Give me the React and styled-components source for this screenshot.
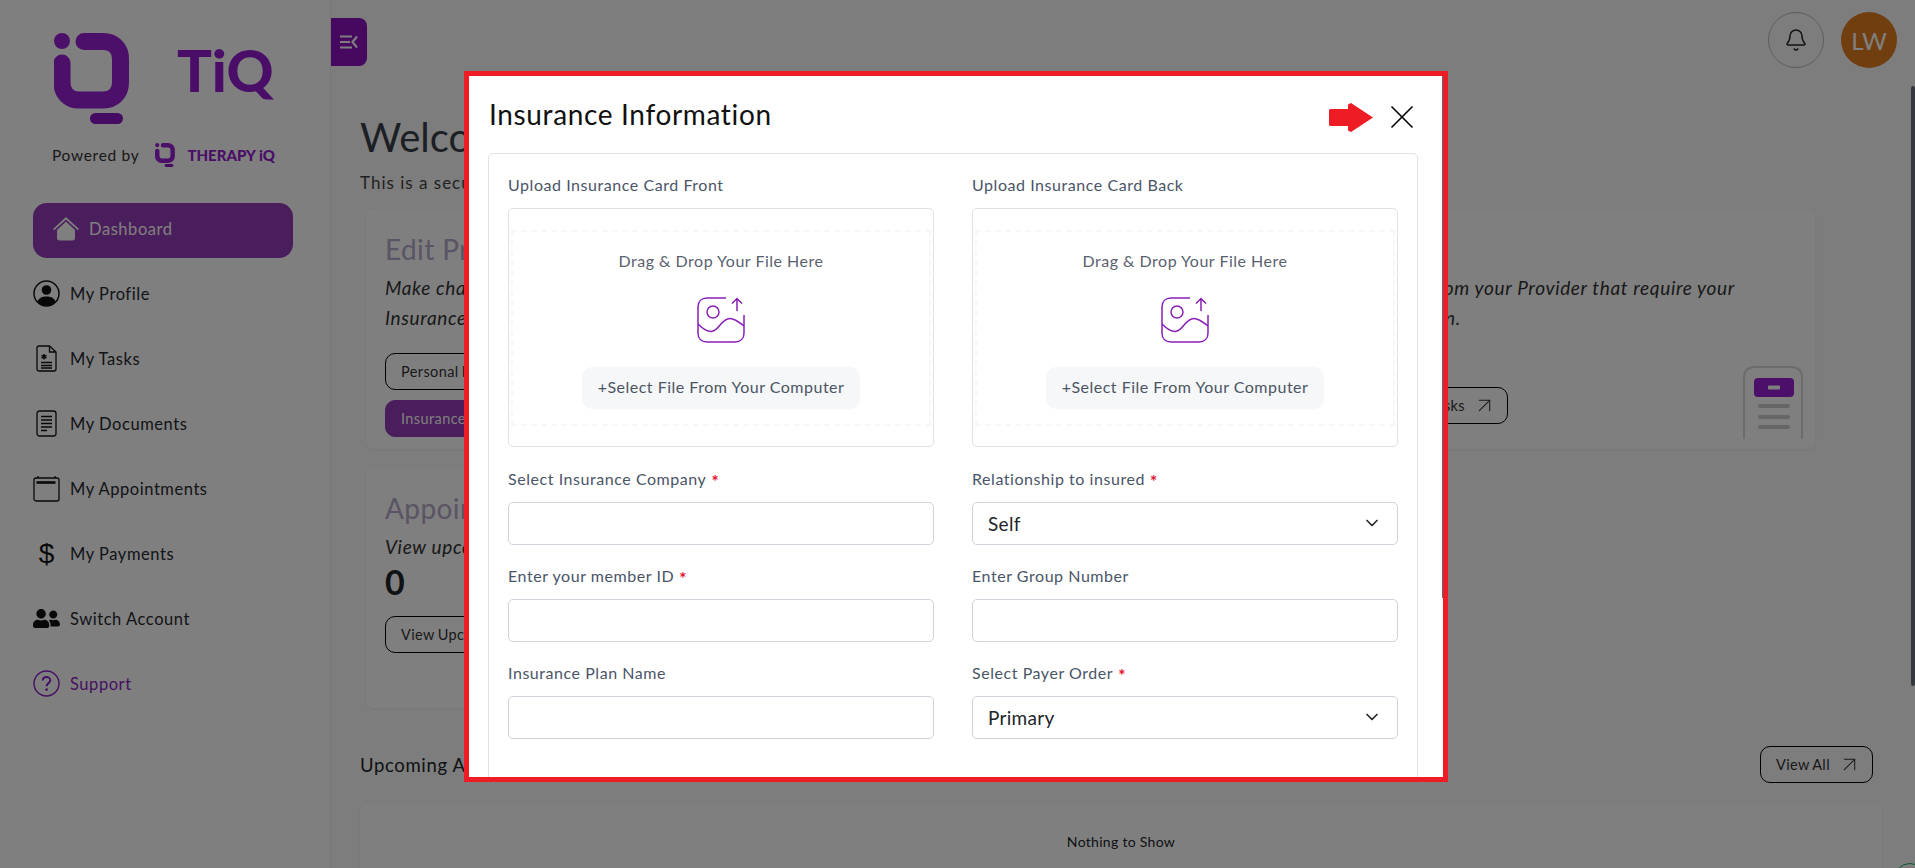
import React from 'react';
import styled, { createGlobalStyle } from 'styled-components';
import { Bell, ChevronDown, ArrowUpRight } from 'lucide-react';
import { FaUserFriends } from 'react-icons/fa';

const GlobalStyle = createGlobalStyle`
    * { box-sizing: border-box; }
    html, body { margin: 0; height: 100%; overflow: hidden; }
    body { font-family: "Lato", "Noto Sans", sans-serif; color: #212529; background: #fff; }
`;

const Page = styled.div`
    display: flex;
    height: 868px;
    overflow: hidden;
    position: relative;
`;

const Sidebar = styled.aside`
    width: 331px;
    flex-shrink: 0;
    padding: 33px 0 0 33px;
    background: #fff;
    border-right: 1px solid #f0f0f0;
`;

const LogoRow = styled.div`
    display: flex;
    align-items: center;
    height: 91px;
    padding-left: 21px;
`;

const BrandName = styled.div`
    margin: -18px 0 0 48px;
    font-size: 58px;
    line-height: 1;
    font-weight: 900;
    color: #941ad0;
`;

const PoweredRow = styled.div`
    display: flex;
    align-items: center;
    gap: 16px;
    height: 24px;
    margin-top: 19px;
    padding-left: 19px;
    font-size: 15.5px;
    letter-spacing: 0.7px;
    color: #333;
`;

const PoweredBrand = styled.span`
    margin-left: -4px;
    font-size: 15px;
    font-weight: 900;
    letter-spacing: 0;
    color: #941ad0;
`;

const NavList = styled.nav`
    margin-top: 36px;
`;

const NavActive = styled.div`
    display: flex;
    align-items: center;
    gap: 10px;
    width: 260px;
    height: 55px;
    margin-bottom: 3px;
    padding: 0 0 3px 20px;
    border-radius: 14px;
    background: #943ab8;
    color: #fff;
    font-size: 16.5px;
    letter-spacing: 0.55px;
`;

const NavItem = styled.div`
    display: flex;
    align-items: center;
    gap: 10px;
    height: 65px;
    font-size: 16.5px;
    letter-spacing: 0.55px;
    color: ${(p) => (p.$accent ? '#8c1fc4' : '#262a30')};
`;

const NavIcon = styled.span`
    display: flex;
    align-items: center;
    justify-content: center;
    width: 27px;
    height: 27px;
`;

const DollarGlyph = styled.span`
    font-family: "Liberation Sans", sans-serif;
    font-size: 28px;
    line-height: 1;
    letter-spacing: 0;
    color: #111;
`;

const Main = styled.main`
    flex: 1;
    min-width: 0;
    background: #fbfbfb;
`;

const Topbar = styled.header`
    display: flex;
    justify-content: space-between;
    align-items: flex-start;
    height: 80px;
    padding: 12px 18px 0 0;
`;

const ToggleButton = styled.button`
    display: flex;
    align-items: center;
    justify-content: center;
    width: 36px;
    height: 48px;
    margin-top: 6px;
    padding: 0;
    border: none;
    border-radius: 0 8px 8px 0;
    background: #8c12be;
`;

const TopActions = styled.div`
    display: flex;
    gap: 17px;
`;

const BellButton = styled.div`
    display: flex;
    align-items: center;
    justify-content: center;
    width: 56px;
    height: 56px;
    border: 1px solid #bbb;
    border-radius: 50%;
    color: #212529;
`;

const Avatar = styled.div`
    display: flex;
    align-items: center;
    justify-content: center;
    width: 56px;
    height: 56px;
    border-radius: 50%;
    background: #e27c20;
    color: #fff;
    font-size: 24px;
`;

const Content = styled.div`
    padding: 33px 33px 0 29px;
`;

const Heading = styled.h1`
    margin: 0;
    font-size: 40px;
    line-height: 48px;
    font-weight: 400;
    color: #383e48;
`;

const SubText = styled.p`
    margin: 10px 0 0;
    font-size: 17px;
    line-height: 24px;
    letter-spacing: 1px;
    color: #444;
`;

const CardGrid = styled.div`
    display: grid;
    grid-template-columns: repeat(3, 1fr);
    gap: 19px 16px;
    margin: 14px 67px 0 6px;
`;

const Card = styled.section`
    position: relative;
    height: 240px;
    padding: 20px 19px;
    border-radius: 8px;
    background: #fff;
    box-shadow: 0 1px 4px rgba(0, 0, 0, 0.06);
    overflow: hidden;
`;

const CardTitle = styled.h2`
    margin: 0;
    font-size: 28px;
    line-height: 40px;
    font-weight: 400;
    letter-spacing: 0.4px;
    color: #b4a8c8;
`;

const CardText = styled.p`
    margin: 4px 0 0;
    font-size: 19px;
    line-height: 30px;
    font-style: italic;
    letter-spacing: 0.65px;
    color: #333;
    max-width: 400px;
`;

const CardCount = styled.div`
    font-size: 34px;
    line-height: 40px;
    font-weight: 700;
`;

const OutlineButton = styled.button`
    display: flex;
    align-items: center;
    justify-content: space-between;
    gap: 7px;
    height: 37px;
    padding: 0 10px 0 15px;
    border: 1px solid ${(p) => (p.$filled ? '#943ab8' : '#000')};
    border-radius: 10px;
    background: ${(p) => (p.$filled ? '#943ab8' : 'transparent')};
    color: ${(p) => (p.$filled ? '#fff' : '#333')};
    font-family: inherit;
    font-size: 14.5px;
    letter-spacing: 0.4px;
    word-spacing: -1px;
`;

const ButtonStack = styled.div`
    display: flex;
    flex-direction: column;
    align-items: flex-start;
    gap: 10px;
    margin-top: ${(p) => p.$top}px;
`;

const DocArt = styled.svg`
    position: absolute;
    right: 12px;
    bottom: 10px;
`;

const SectionHead = styled.div`
    display: flex;
    justify-content: space-between;
    align-items: center;
    margin: 38px 9px 0 0;
    font-size: 18.5px;
    letter-spacing: 0.65px;
`;

const EmptyTable = styled.div`
    height: 200px;
    margin-top: 21px;
    padding-top: 28px;
    border-radius: 8px;
    background: #fff;
    font-size: 14px;
    line-height: 20px;
    letter-spacing: 0.3px;
    text-align: center;
    box-shadow: 0 1px 4px rgba(0, 0, 0, 0.06);
`;

const ChatRing = styled.div`
    position: absolute;
    right: -11px;
    bottom: -27px;
    width: 32px;
    height: 32px;
    border: 1px solid #12b45c;
    border-radius: 50%;
`;

const PageThumb = styled.div`
    position: absolute;
    top: 86px;
    right: 0;
    z-index: 2;
    width: 4px;
    height: 600px;
    border-radius: 2px;
    background: #33383e;
`;

const Backdrop = styled.div`
    position: fixed;
    inset: 0;
    padding: 71px 0 0 464px;
    background: rgba(0, 0, 0, 0.5);
`;

const Modal = styled.div`
    position: relative;
    width: 984px;
    height: 711px;
    border: 5px solid #ee1c25;
    background: #fff;
    overflow: hidden;
`;

const ModalThumb = styled.div`
    position: absolute;
    top: 0;
    right: 0;
    width: 1px;
    height: 522px;
    background: #5a6b7d;
`;

const ModalHead = styled.div`
    display: flex;
    align-items: center;
    justify-content: space-between;
    height: 77px;
    padding: 5px 29px 0 20px;
`;

const ModalTitle = styled.h3`
    margin: 0 0 6px;
    font-size: 28px;
    line-height: 40px;
    font-weight: 400;
    color: #111;
    letter-spacing: 0.65px;
`;

const CloseGroup = styled.div`
    display: flex;
    align-items: center;
    gap: 17px;
`;

const ModalBody = styled.div`
    margin: 0 25px 0 19px;
    padding: 19px 18px 100px 19px;
    border: 1px solid #dee2e6;
    border-radius: 5px;
`;

const FormGrid = styled.div`
    display: grid;
    grid-template-columns: 426px 426px;
    gap: 19px 38px;
`;

const Label = styled.div`
    height: 24px;
    margin-bottom: 11px;
    font-size: 16px;
    line-height: 24px;
    color: #4a5568;
    letter-spacing: 0.55px;
`;

const Required = styled.span`
    margin-left: 5px;
    color: #e3122d;
    font-size: 17px;
    font-weight: 700;
    vertical-align: -3px;
`;

const UploadBox = styled.div`
    height: 239px;
    margin-bottom: 1px;
    padding: 21px 2px 0;
    border: 1px solid #dee2e6;
    border-radius: 5px;
`;

const DropZone = styled.div`
    display: flex;
    flex-direction: column;
    align-items: center;
    height: 196px;
    padding-top: 17px;
    border: 2px dashed #f6f7f9;
    font-size: 16px;
    line-height: 24px;
    letter-spacing: 0.5px;
    color: #5a6270;
`;

const UploadIcon = styled.svg`
    margin: 24px 0 24px;
`;

const SelectFile = styled.div`
    display: flex;
    align-items: center;
    justify-content: center;
    width: 278px;
    height: 42px;
    padding-bottom: 3px;
    border-radius: 10px;
    background: #f6f7f9;
    color: #4b5563;
`;

const Field = styled.div`
    display: flex;
    align-items: center;
    justify-content: space-between;
    height: 43px;
    padding: 0 15px 1px;
    border: 1px solid #ced4da;
    border-radius: 5px;
    background: #fff;
    font-size: 19px;
    letter-spacing: 0.3px;
    color: #212529;
`;

function LogoMark({ width, height }) {
    return (
        <svg width={width} height={height} viewBox="54 33 75 91" fill="none">
            <circle cx="62" cy="41" r="8" fill="#981ed4" />
            <path d="M84 41.500H103C113.500 41.500 120.500 48.500 120.500 59V82.500C120.500 93 113.500 100 103 100H79C69 100 62 93 62 82.500V63" stroke="#981ed4" strokeWidth="17" strokeLinecap="round" />
            <rect x="90" y="113" width="33" height="11" rx="5.500" fill="#8a14c4" />
        </svg>
    );
}

function ToggleIcon() {
    return (
        <svg width="18" height="14" viewBox="0 0 18 14" fill="none" stroke="#fff" strokeWidth="2.200">
            <path d="M0 1.500H12M0 7H10M0 12.500H12" />
            <path d="M17 1.500L12.500 7L17 12.500" />
        </svg>
    );
}

function HomeIcon() {
    return (
        <svg width="26" height="24" viewBox="0 0 26 24" fill="#fff">
            <path d="M13 0L26 12L24.800 13.300L13 2.500L1.200 13.300L0 12Z" />
            <path d="M4 13L13 4.500L22 13V21C22 22.700 21 23.500 19.500 23.500H6.500C5 23.500 4 22.700 4 21Z" />
        </svg>
    );
}

function ProfileIcon() {
    return (
        <svg width="27" height="27" viewBox="0 0 27 27">
            <circle cx="13.500" cy="13.500" r="12.500" fill="none" stroke="#111" strokeWidth="1.500" />
            <circle cx="13.500" cy="10" r="4.800" fill="#111" />
            <path d="M4.500 21.500C6 17.500 9.500 16.500 13.500 16.500S21 17.500 22.500 21.500C20 24.500 17 25.800 13.500 25.800S7 24.500 4.500 21.500Z" fill="#111" />
        </svg>
    );
}

function TaskIcon() {
    return (
        <svg width="21" height="27" viewBox="0 0 21 27" fill="none" stroke="#111" strokeWidth="1.300">
            <path d="M3 1H13.500L20 7V24C20 25.300 19.200 26 18 26H3C1.800 26 1 25.300 1 24V3C1 1.800 1.800 1 3 1Z" />
            <path d="M13.500 1V7H20" />
            <path d="M5 17.500H16M5 20.500H16M5 23H16" />
            <path d="M8 9V14.500M5.500 10.300L10.500 13.200M10.500 10.300L5.500 13.200" strokeWidth="1.500" />
        </svg>
    );
}

function DocumentIcon() {
    return (
        <svg width="21" height="27" viewBox="0 0 21 27" fill="none" stroke="#111" strokeWidth="1.300">
            <rect x="1" y="1" width="19" height="25" rx="2.500" />
            <path d="M5 6.500H16M5 10H16M5 13.500H16M5 17H16M5 20.500H11" />
        </svg>
    );
}

function CalendarIcon() {
    return (
        <svg width="27" height="27" viewBox="0 0 27 27" fill="none" stroke="#111" strokeWidth="1.300">
            <rect x="1" y="3" width="25" height="23" rx="2" />
            <path d="M5 1V3M22 1V3" />
            <path d="M3.500 7.500H22.500" strokeWidth="2.600" />
        </svg>
    );
}

function SupportIcon() {
    return (
        <svg width="27" height="27" viewBox="0 0 27 27" fill="none" stroke="#8c1fc4" strokeWidth="1.400">
            <circle cx="13.500" cy="13.500" r="12.500" />
            <path d="M9.800 10.500C9.800 8.300 11.500 7 13.500 7S17.300 8.300 17.300 10.300C17.300 13 13.600 13.300 13.600 16.200" strokeWidth="2" />
            <circle cx="13.600" cy="19.600" r="1.300" fill="#8c1fc4" stroke="none" />
        </svg>
    );
}

function CloseIcon() {
    return (
        <svg width="24" height="24" viewBox="0 0 24 24" fill="none" stroke="#000" strokeWidth="1.600">
            <path d="M1.500 1.500L22.500 22.500M22.500 1.500L1.500 22.500" />
        </svg>
    );
}

function RedArrow() {
    return (
        <svg width="44" height="29" viewBox="0 0 44 29" fill="#ee1c25">
            <path d="M1 6H19V1.500L22 0L44 14.500L22 29L19 27.500V23H1L0 22V7Z" />
        </svg>
    );
}

function ImageUpload() {
    return (
        <UploadIcon width="48" height="46" viewBox="0 0 48 46" fill="none" stroke="#8a1fb8" strokeWidth="1.500">
            <path d="M29 1H10C4.500 1 1 4.500 1 10V36C1 41.500 4.500 45 10 45H38C43.500 45 47 41.500 47 36V18" />
            <circle cx="16" cy="15" r="6" />
            <path d="M1 27C5 31 9 34.500 14 34.500C22 34.500 24 21.500 33 21.500C38 21.500 43 26 47 29" />
            <path d="M40 14V2M35 6.500L40 1.500L45 6.500" />
        </UploadIcon>
    );
}

function OpenArrow() {
    return <ArrowUpRight size={25} strokeWidth={1} />;
}

function UploadField({ title }) {
    return (
        <div>
            <Label>{title}</Label>
            <UploadBox>
                <DropZone>
                    Drag &amp; Drop Your File Here
                    <ImageUpload />
                    <SelectFile>+Select File From Your Computer</SelectFile>
                </DropZone>
            </UploadBox>
        </div>
    );
}

function FormField({ title, required, value }) {
    return (
        <div>
            <Label>
                {title}
                {required && <Required>*</Required>}
            </Label>
            <Field>
                {value}
                {value && <ChevronDown size={20} color="#212529" />}
            </Field>
        </div>
    );
}

const navItems = [
    { label: 'My Profile', icon: <ProfileIcon /> },
    { label: 'My Tasks', icon: <TaskIcon /> },
    { label: 'My Documents', icon: <DocumentIcon /> },
    { label: 'My Appointments', icon: <CalendarIcon /> },
    { label: 'My Payments', icon: <DollarGlyph>$</DollarGlyph> },
    { label: 'Switch Account', icon: <FaUserFriends size={27} color="#111" /> },
    { label: 'Support', icon: <SupportIcon />, accent: true },
];

export default function App() {
    return (
        <Page>
            <GlobalStyle />
            <Sidebar>
                <LogoRow>
                    <LogoMark width={75} height={91} />
                    <BrandName>TiQ</BrandName>
                </LogoRow>
                <PoweredRow>
                    Powered by
                    <LogoMark width={20} height={24} />
                    <PoweredBrand>THERAPY iQ</PoweredBrand>
                </PoweredRow>
                <NavList>
                    <NavActive>
                        <HomeIcon />
                        Dashboard
                    </NavActive>
                    {navItems.map((item) => (
                        <NavItem key={item.label} $accent={item.accent}>
                            <NavIcon>{item.icon}</NavIcon>
                            {item.label}
                        </NavItem>
                    ))}
                </NavList>
            </Sidebar>
            <Main>
                <Topbar>
                    <ToggleButton><ToggleIcon /></ToggleButton>
                    <TopActions>
                        <BellButton><Bell size={24} strokeWidth={1.500} /></BellButton>
                        <Avatar>LW</Avatar>
                    </TopActions>
                </Topbar>
                <Content>
                    <Heading>Welcome Back</Heading>
                    <SubText>This is a secure portal for your care</SubText>
                    <CardGrid>
                        <Card>
                            <CardTitle>Edit Profile</CardTitle>
                            <CardText>Make changes to your Personal Info and Insurance Information</CardText>
                            <ButtonStack $top={20}>
                                <OutlineButton>Personal Information <OpenArrow /></OutlineButton>
                                <OutlineButton $filled>Insurance Information <OpenArrow /></OutlineButton>
                            </ButtonStack>
                        </Card>
                        <Card>
                            <CardTitle>Documents</CardTitle>
                            <CardText>View documents shared with you</CardText>
                        </Card>
                        <Card>
                            <CardTitle>Tasks</CardTitle>
                            <CardText>Actions from your Provider that require your completion.</CardText>
                            <ButtonStack $top={54}>
                                <OutlineButton>See My Tasks <OpenArrow /></OutlineButton>
                            </ButtonStack>
                            <DocArt width="60" height="73" viewBox="0 0 60 73" fill="none">
                                <path d="M1 73V12C1 5 5 1 12 1H48C55 1 59 5 59 12V73" stroke="#d8d8d8" strokeWidth="2" />
                                <rect x="11" y="12" width="40" height="19" rx="4" fill="#981ed4" />
                                <rect x="25" y="19.500" width="12" height="4" rx="1" fill="#fff" />
                                <rect x="15" y="38" width="32" height="4" rx="2" fill="#ccc" />
                                <rect x="15" y="49" width="32" height="4" rx="2" fill="#ccc" />
                                <rect x="15" y="59" width="32" height="4" rx="2" fill="#ccc" />
                            </DocArt>
                        </Card>
                        <Card>
                            <CardTitle>Appointments</CardTitle>
                            <CardText>View upcoming appointments</CardText>
                            <CardCount>0</CardCount>
                            <ButtonStack $top={14}>
                                <OutlineButton>View Upcoming <OpenArrow /></OutlineButton>
                            </ButtonStack>
                        </Card>
                    </CardGrid>
                    <SectionHead>
                        Upcoming Appointments
                        <OutlineButton>View All <OpenArrow /></OutlineButton>
                    </SectionHead>
                    <EmptyTable>Nothing to Show</EmptyTable>
                </Content>
            </Main>
            <ChatRing />
            <Backdrop>
                <Modal>
                    <ModalThumb />
                    <ModalHead>
                        <ModalTitle>Insurance Information</ModalTitle>
                        <CloseGroup>
                            <RedArrow />
                            <CloseIcon />
                        </CloseGroup>
                    </ModalHead>
                    <ModalBody>
                        <FormGrid>
                            <UploadField title="Upload Insurance Card Front" />
                            <UploadField title="Upload Insurance Card Back" />
                            <FormField title="Select Insurance Company" required />
                            <FormField title="Relationship to insured" required value="Self" />
                            <FormField title="Enter your member ID" required />
                            <FormField title="Enter Group Number" />
                            <FormField title="Insurance Plan Name" />
                            <FormField title="Select Payer Order" required value="Primary" />
                        </FormGrid>
                    </ModalBody>
                </Modal>
            </Backdrop>
            <PageThumb />
        </Page>
    );
}
